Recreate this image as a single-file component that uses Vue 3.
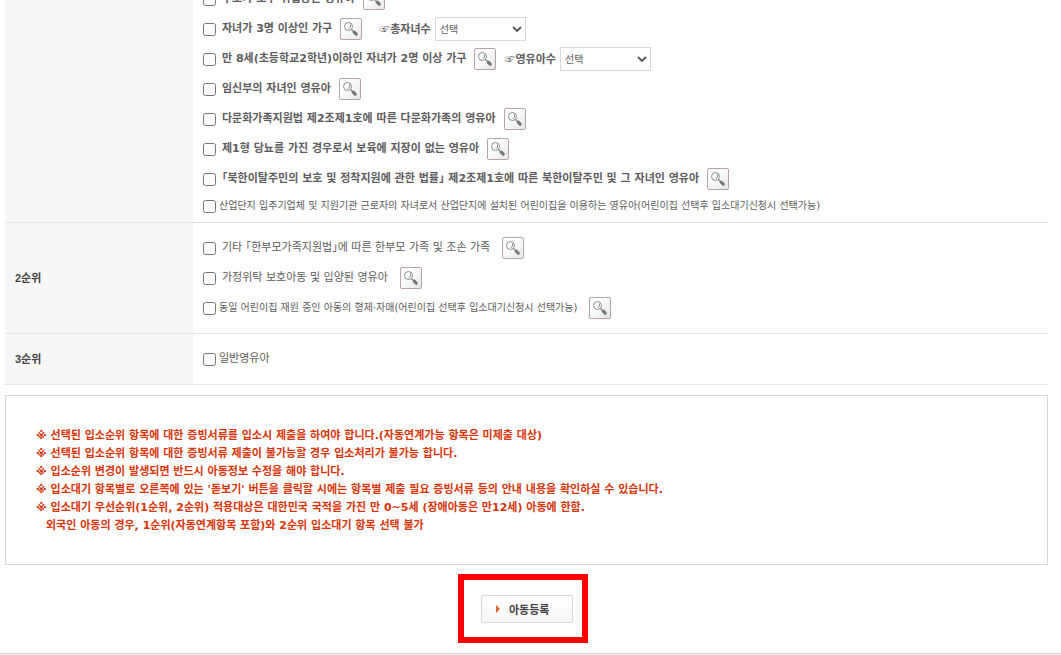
<script setup>
import { ref } from 'vue'

const groups = ref([
  {
    id: 'first',
    title: '',
    items: [
      { text: '부모가 모두 취업중인 영유아', strong: true, help: true },
      { text: '자녀가 3명 이상인 가구', strong: true, help: true, count: '총자녀수', wide: true },
      { text: '만 8세(초등학교2학년)이하인 자녀가 2명 이상 가구', strong: true, help: true, count: '영유아수' },
      { text: '임신부의 자녀인 영유아', strong: true, help: true },
      { text: '다문화가족지원법 제2조제1호에 따른 다문화가족의 영유아', strong: true, help: true },
      { text: '제1형 당뇨를 가진 경우로서 보육에 지장이 없는 영유아', strong: true, help: true },
      { text: '「북한이탈주민의 보호 및 정착지원에 관한 법률」 제2조제1호에 따른 북한이탈주민 및 그 자녀인 영유아', strong: true, help: true },
      { text: '산업단지 입주기업체 및 지원기관 근로자의 자녀로서 산업단지에 설치된 어린이집을 이용하는 영유아(어린이집 선택후 입소대기신청시 선택가능)', small: true, tight: true },
    ],
  },
  {
    id: 'second',
    title: '2순위',
    items: [
      { text: '기타 「한부모가족지원법」에 따른 한부모 가족 및 조손 가족', help: true },
      { text: '가정위탁 보호아동 및 입양된 영유아', help: true },
      { text: '동일 어린이집 재원 중인 아동의 형제·자매(어린이집 선택후 입소대기신청시 선택가능)', small: true, tight: true, help: true },
    ],
  },
  {
    id: 'third',
    title: '3순위',
    items: [{ text: '일반영유아', tight: true }],
  },
])

const notes = [
  '※ 선택된 입소순위 항목에 대한 증빙서류를 입소시 제출을 하여야 합니다.(자동연계가능 항목은 미제출 대상)',
  '※ 선택된 입소순위 항목에 대한 증빙서류 제출이 불가능할 경우 입소처리가 불가능 합니다.',
  '※ 입소순위 변경이 발생되면 반드시 아동정보 수정을 해야 합니다.',
  "※ 입소대기 항목별로 오른쪽에 있는 '돋보기' 버튼을 클릭할 시에는 항목별 제출 필요 증빙서류 등의 안내 내용을 확인하실 수 있습니다.",
  '※ 입소대기 우선순위(1순위, 2순위) 적용대상은 대한민국 국적을 가진 만 0~5세 (장애아동은 만12세) 아동에 한함.',
]
</script>

<template>
  <main class="page">
    <table class="ranks">
      <tbody>
        <tr v-for="g in groups" :key="g.id" :class="g.id">
          <th scope="row">{{ g.title }}</th>
          <td>
            <ul>
              <li v-for="(item, i) in g.items" :key="i" :class="{ strong: item.strong, small: item.small, tight: item.tight }">
                <input :id="g.id + i" type="checkbox" />
                <label :for="g.id + i" class="text">{{ item.text }}</label>
                <button v-if="item.help" type="button" class="help" aria-label="돋보기">
                  <svg viewBox="0 0 16 16" width="16" height="16" aria-hidden="true">
                    <circle cx="5.5" cy="5.5" r="4" fill="#fff" stroke="#8a8a8a" />
                    <path d="M7.5 3.5v2.5L5.5 8" fill="none" stroke="#888" />
                    <path d="M8.5 8.5l2.5 2.5" stroke="#888" stroke-width="1.2" />
                    <path d="M11.2 11.2l2 2" stroke="#777" stroke-width="3.2" stroke-linecap="round" />
                  </svg>
                </button>
                <span v-if="item.count" class="count" :class="{ wide: item.wide }">
                  <label :for="g.id + i + 'n'">☞{{ item.count }}</label>
                  <span class="picker">
                    <select :id="g.id + i + 'n'"><option>선택</option></select>
                    <svg viewBox="0 0 10 6" width="10" height="6" aria-hidden="true">
                      <path d="M1 1l4 4 4-4" fill="none" stroke="#555" stroke-width="1.8" />
                    </svg>
                  </span>
                </span>
              </li>
            </ul>
          </td>
        </tr>
      </tbody>
    </table>

    <section class="notes">
      <p v-for="n in notes" :key="n">{{ n }}</p>
      <p class="cont">외국인 아동의 경우, 1순위(자동연계항목 포함)와 2순위 입소대기 항목 선택 불가</p>
    </section>

    <div class="actions">
      <div class="frame">
        <button type="button" class="submit">
          <svg viewBox="0 0 4 8" width="4" height="8" aria-hidden="true"><path d="M0 0l4 4-4 4z" fill="#e2652b" /></svg>
          아동등록
        </button>
      </div>
    </div>
    <footer></footer>
  </main>
</template>

<style>
body {
  margin: 0;
  background: #fff;
}
</style>

<style scoped>
.page {
  overflow: hidden;
  font: 11px/18px "DejaVu Sans", "Noto Sans CJK KR", sans-serif;
  font-feature-settings: "halt";
  color: #5c5c5c;
}
.ranks {
  width: calc(100% - 18px);
  margin: -16px 13px 0 5px;
  border-collapse: separate;
  border-spacing: 0;
}
th,
td {
  padding: 0;
  border-bottom: 1px solid #e2e2e2;
}
th {
  width: 178px;
  padding-left: 10px;
  background: #f7f7f7;
  color: #444;
  font-family: "Liberation Sans", "Noto Sans CJK KR", sans-serif;
  text-align: left;
}
td {
  padding-left: 10px;
}
ul {
  margin: 0;
  padding: 0;
  list-style: none;
}
.first td {
  padding-bottom: 4px;
}
.second td {
  padding-top: 10px;
  padding-bottom: 10px;
}
.third td {
  padding: 10px 0 10px 10px;
}
li {
  display: flex;
  align-items: center;
  height: 30px;
  white-space: nowrap;
}
.first li:last-child {
  height: 24px;
}
li input {
  width: 13px;
  height: 13px;
  margin: 0 6px 0 0;
}
li.tight input {
  margin-right: 3px;
}
.strong {
  font-weight: bold;
}
.small .text {
  font-size: 10px;
}
.help {
  display: flex;
  align-items: center;
  justify-content: center;
  box-sizing: border-box;
  width: 22px;
  height: 22px;
  margin-left: 12px;
  padding: 0;
  border: 1px solid #b8a4a4;
  border-radius: 2px;
  background: linear-gradient(135deg, #fff 30%, #e6e6e6);
}
.strong .help {
  margin-left: 8px;
}
.count {
  display: flex;
  align-items: center;
  gap: 4px;
  margin-left: 8px;
  font-family: "Liberation Sans", "Noto Sans CJK KR", sans-serif;
}
.count.wide {
  margin-left: 17px;
}
.picker {
  display: grid;
  align-items: center;
}
.picker > * {
  grid-area: 1 / 1;
}
.picker svg {
  justify-self: end;
  margin-right: 4px;
  pointer-events: none;
}
select {
  width: 91px;
  height: 24px;
  padding: 0 4px;
  border: 1px solid #d8d8d8;
  border-radius: 0;
  background-color: #fff;
  appearance: none;
  font: 10px "Liberation Sans", "Noto Sans CJK KR", sans-serif;
  color: #5c5c5c;
}
.notes {
  margin: 10px 13px 0 5px;
  padding: 31px 30px 29px;
  border: 1px solid #d8d8d8;
  font-weight: bold;
  color: #d8340a;
}
.notes p {
  margin: 0;
}
.notes .cont {
  padding-left: 10px;
}
.actions {
  display: flex;
  justify-content: center;
  padding: 9px 15px 10px 0;
}
.frame {
  padding: 15px 9px 14px 17px;
  border: 6px solid #f00;
}
.submit {
  display: flex;
  align-items: center;
  gap: 9px;
  height: 28px;
  width: 92px;
  padding: 0 0 0 14px;
  border: 1px solid #d8d8d8;
  border-radius: 2px;
  background: linear-gradient(#fff, #f6f6f6);
  font: bold 11px "Liberation Sans", "Noto Sans CJK KR", sans-serif;
  color: #444;
}
footer {
  height: 1px;
  border-top: 1px solid #d8d8d8;
  background: #f0f0f0;
}
</style>
